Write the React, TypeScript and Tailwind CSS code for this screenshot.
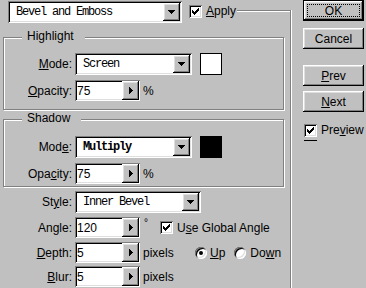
import React from "react";

const sunken =
  "shadow-[inset_1px_1px_0_#808080,inset_-1px_-1px_0_#ffffff,inset_2px_2px_0_#000000,inset_-2px_-2px_0_#dfdfdf]";
const raised =
  "shadow-[inset_-1px_-1px_0_#000000,inset_1px_1px_0_#ffffff,inset_-2px_-2px_0_#808080,inset_2px_2px_0_#dfdfdf]";

function DownTri() {
  return (
    <svg width="7" height="4" shapeRendering="crispEdges">
      <path d="M0 0h7v1h-1v1h-1v1h-1v1h-1v-1h-1v-1h-1v-1h-1z" fill="#000" />
    </svg>
  );
}

function RightTri() {
  return (
    <svg width="4" height="7" shapeRendering="crispEdges">
      <path d="M0 0h1v1h1v1h1v1h1v1h-1v1h-1v1h-1v1h-1z" fill="#000" />
    </svg>
  );
}

function Check() {
  return (
    <svg width="7" height="7" shapeRendering="crispEdges">
      <path
        d="M6 0h1v1h-1zM5 1h2v1h-2zM0 2h1v1h-1zM4 2h3v1h-3zM0 3h2v1h-2zM3 3h3v1h-3zM0 4h5v1h-5zM1 5h3v1h-3zM2 6h1v1h-1z"
        fill="#000"
      />
    </svg>
  );
}

function Combo({ className = "", text, bold = false }: { className?: string; text: string; bold?: boolean }) {
  return (
    <div className={`flex h-[22px] items-center bg-white pl-[8px] ${sunken} ${className}`}>
      <span
        className={`font-['Liberation_Mono',monospace] text-[12px] tracking-[-1.2px] whitespace-pre ${bold ? "font-bold" : ""}`}
      >
        {text}
      </span>
      <div className={`ml-auto mr-[2px] flex h-[18px] w-[17px] items-center justify-center bg-[#c0c0c0] ${raised}`}>
        <DownTri />
      </div>
    </div>
  );
}

function Spin({ className = "", value }: { className?: string; value: string }) {
  return (
    <div className={`flex h-[21px] w-[65px] bg-white pl-[2px] ${sunken} ${className}`}>
      <span className="self-center leading-[14px]">{value}</span>
      <div className={`my-[1px] ml-auto mr-[1px] flex w-[17px] items-center justify-center bg-[#c0c0c0] ${raised}`}>
        <RightTri />
      </div>
    </div>
  );
}

function CheckBox({ className = "", checked }: { className?: string; checked?: boolean }) {
  return (
    <div className={`flex h-[13px] w-[13px] shrink-0 items-center justify-center bg-white ${sunken} ${className}`}>
      {checked ? <Check /> : null}
    </div>
  );
}

function Radio({ className = "", checked }: { className?: string; checked?: boolean }) {
  return (
    <div
      className={`flex h-[12px] w-[12px] shrink-0 items-center justify-center rounded-full bg-white shadow-[inset_1px_1px_0_#808080,inset_-1px_-1px_0_#ffffff,inset_2px_2px_0_#000000,inset_-2px_-2px_0_#dfdfdf] ${className}`}
    >
      {checked ? <div className="h-[4px] w-[4px] rounded-full bg-black" /> : null}
    </div>
  );
}

function Button({ children, className = "", isDefault = false }: { children: React.ReactNode; className?: string; isDefault?: boolean }) {
  if (isDefault) {
    return (
      <div className={`h-[21px] w-[61px] border border-black ${className}`}>
        <div className={`relative flex h-full w-full items-center justify-center bg-[#c0c0c0] ${raised}`}>
          <div className="absolute inset-[3px] border border-dotted border-black" />
          <span className="leading-[14px]">{children}</span>
        </div>
      </div>
    );
  }
  return (
    <div className={`flex h-[21px] w-[61px] items-center justify-center bg-[#c0c0c0] ${raised} ${className}`}>
      <span className="leading-[14px]">{children}</span>
    </div>
  );
}

function Group({ title, className = "", children }: { title: string; className?: string; children: React.ReactNode }) {
  return (
    <div
      className={`relative ml-[3px] w-[281px] border border-[#808080] shadow-[inset_1px_1px_0_#ffffff,1px_1px_0_#ffffff] ${className}`}
    >
      <span className="absolute left-[18px] top-[-9px] bg-[#c0c0c0] pl-[5px] pr-[11px] leading-[14px]">{title}</span>
      {children}
    </div>
  );
}

export default function App() {
  return (
    <div className="flex h-[288px] w-[366px] overflow-hidden bg-[#c0c0c0] font-['Liberation_Sans',Arial,sans-serif] text-[12px] leading-[14px] text-black">
      {/* left column */}
      <div className="flex w-[290px] shrink-0 flex-col">
        <div className="flex h-[23px] shrink-0">
          <Combo className="ml-[8px] mt-[1px] w-[174px]" text="Bevel and Emboss" />
          <CheckBox className="ml-[7px] mt-[5px]" checked />
          <span className="ml-[4px] mt-[4px]">
            <u>A</u>pply
          </span>
          <div className="ml-[1px] mt-[10px] h-[2px] flex-1 border-t border-t-[#808080] bg-white" />
        </div>

        <Group title="Highlight" className="mt-[14px] h-[73px] pt-[15px]">
          <div className="flex h-[22px] items-center">
            <span className="w-[68px] text-right">
              <u>M</u>ode:
            </span>
            <Combo className="ml-[3px] w-[117px]" text="Screen" />
            <div className="ml-[8px] h-[22px] w-[22px] border border-black bg-white" />
          </div>
          <div className="mt-[5px] flex h-[21px] items-center">
            <span className="w-[68px] text-right">
              <u>O</u>pacity:
            </span>
            <Spin className="ml-[3px]" value="75" />
            <span className="ml-[3px]">%</span>
          </div>
        </Group>

        <Group title="Shadow" className="mt-[9px] h-[68px] pt-[16px]">
          <div className="flex h-[22px] items-center">
            <span className="w-[68px] text-right">
              Mod<u>e</u>:
            </span>
            <Combo className="ml-[3px] w-[117px]" text="Multiply" bold />
            <div className="ml-[8px] h-[22px] w-[22px] border border-black bg-black" />
          </div>
          <div className="mt-[5px] flex h-[21px] items-center">
            <span className="w-[68px] text-right">
              Opa<u>c</u>ity:
            </span>
            <Spin className="ml-[3px]" value="75" />
            <span className="ml-[3px]">%</span>
          </div>
        </Group>

        <div className="mt-[4px] flex h-[22px] items-center">
          <span className="w-[72px] text-right">
            St<u>y</u>le:
          </span>
          <Combo className="ml-[3px] w-[126px]" text="Inner Bevel" />
        </div>

        <div className="mt-[4px] flex h-[21px] items-center">
          <span className="w-[72px] text-right">Angle:</span>
          <Spin className="ml-[3px]" value="120" />
          <div className="flex h-full w-[20px] pl-[4px] pt-[1px]">
            <span className="text-[10px] leading-[10px]">°</span>
          </div>
          <CheckBox checked />
          <span className="ml-[4px]">
            U<u>s</u>e Global Angle
          </span>
        </div>

        <div className="mt-[4px] flex h-[21px] items-center">
          <span className="w-[72px] text-right">
            <u>D</u>epth:
          </span>
          <Spin className="ml-[3px]" value="5" />
          <span className="ml-[3px] w-[52px]">pixels</span>
          <Radio checked />
          <span className="ml-[3px]">
            <u>U</u>p
          </span>
          <Radio className="ml-[9px]" />
          <span className="ml-[4px]">
            Do<u>w</u>n
          </span>
        </div>

        <div className="mt-[3px] flex h-[21px] items-center">
          <span className="w-[72px] text-right">
            <u>B</u>lur:
          </span>
          <Spin className="ml-[3px]" value="5" />
          <span className="ml-[3px]">pixels</span>
        </div>
      </div>

      {/* etched vertical separator */}
      <div className="mt-[10px] w-px shrink-0 bg-[#808080]" />
      <div className="mt-[10px] w-px shrink-0 bg-white" />

      {/* right column */}
      <div className="ml-[11px] flex flex-col">
        <Button isDefault>OK</Button>
        <Button className="mt-[7px]">Cancel</Button>
        <Button className="mt-[16px]">
          <u>P</u>rev
        </Button>
        <Button className="mt-[5px]">
          <u>N</u>ext
        </Button>
        <div className="mt-[11px] flex items-center">
          <CheckBox className="ml-[1px]" checked />
          <span className="ml-[4px]">
            Pre<u>v</u>iew
          </span>
        </div>
        <div className="ml-[1px] mt-[3px] h-px w-[13px] bg-black" />
      </div>
    </div>
  );
}
